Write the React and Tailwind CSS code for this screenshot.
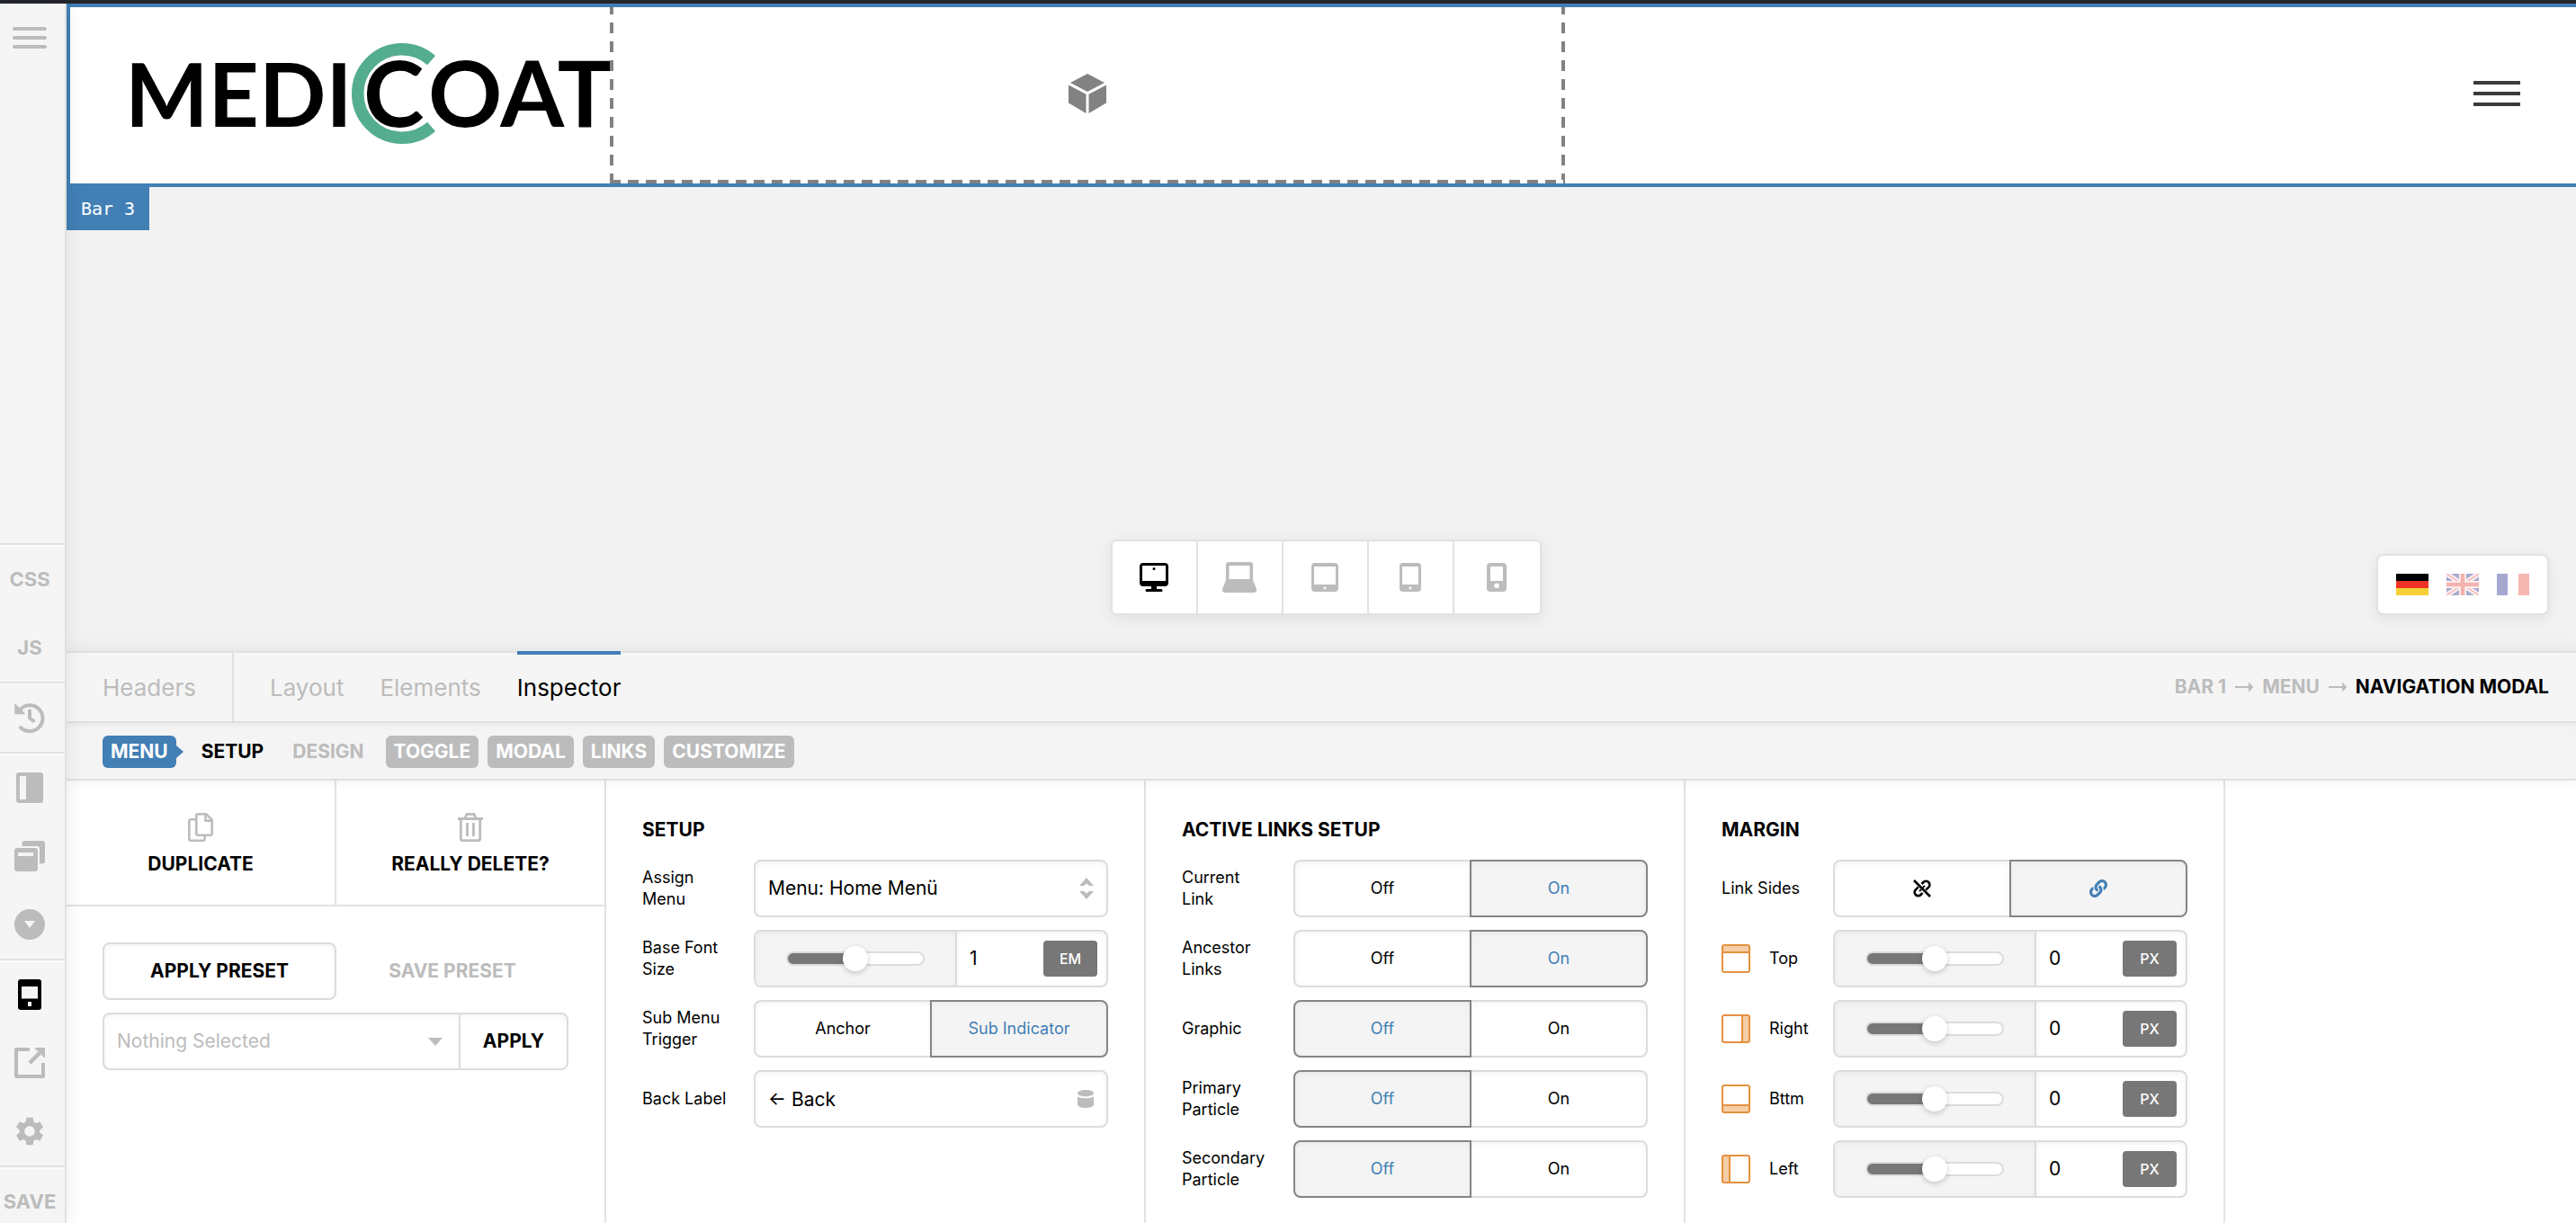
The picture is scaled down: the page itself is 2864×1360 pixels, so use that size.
import { useId, useState } from "react";
import { FaLink } from "react-icons/fa";
import { MdSettings } from "react-icons/md";

const tabs = ["Layout", "Elements", "Inspector"];

const groups = ["Toggle", "Modal", "Links", "Customize"];

const devices = [
  { name: "Desktop", icon: DesktopIcon },
  { name: "Laptop", icon: LaptopIcon },
  { name: "Tablet", icon: TabletIcon },
  { name: "Phone landscape", icon: PhoneIcon },
  { name: "Phone", icon: SmallPhoneIcon },
];

const languages = [
  { name: "Deutsch", flag: GermanFlag },
  { name: "English", flag: BritishFlag },
  { name: "Français", flag: FrenchFlag },
];

const activeLinks = [
  { label: "Current Link", on: true },
  { label: "Ancestor Links", on: true },
  { label: "Graphic", on: false },
  { label: "Primary Particle", on: false },
  { label: "Secondary Particle", on: false },
];

const sides = ["Top", "Right", "Bttm", "Left"];

/* ---------- Icons ---------- */

function Logo() {
  return (
    <svg
      viewBox="-12 -12 550 136"
      className="shrink-0 w-[550px] h-[136px]"
      role="img"
      aria-label="Medicoat"
    >
      <path
        d="M333.6 19.1A49.25 49.25 0 1 0 333.6 92.9"
        fill="none"
        stroke="#54ad8f"
        strokeWidth="13.5"
      />
      <g fontFamily="Lato, sans-serif" fontWeight="700" fill="#000">
        <text x="-7" y="93" fontSize="98">MEDI</text>
        <text x="258" y="93" fontSize="102">C</text>
        <text x="330" y="93" fontSize="102">OAT</text>
      </g>
    </svg>
  );
}

function CubeIcon() {
  return (
    <svg viewBox="0 0 42 44" className="w-[42px] h-11" fill="#828282">
      <path d="M21 0l19 10-19 10L2 10zM0 12.5l19.5 10.3V44L0 32.5zM42 12.5L22.5 22.8V44L42 32.5z" />
    </svg>
  );
}

function HistoryIcon() {
  return (
    <svg viewBox="0 0 34 34" className="size-[34px]" fill="none" stroke="currentColor" strokeWidth="4">
      <path d="M6.5 8A14.4 14.4 0 1 1 7 28" strokeLinecap="round" />
      <path d="M17 9.5v8l4 3" strokeLinecap="round" strokeLinejoin="round" />
      <path d="M1 2.5v10h10z" fill="currentColor" strokeWidth="1.5" strokeLinejoin="round" />
    </svg>
  );
}

function PanelIcon() {
  return (
    <svg viewBox="0 0 30 34" className="w-[30px] h-[34px]" fill="currentColor" fillRule="evenodd">
      <path d="M3 0h24a3 3 0 0 1 3 3v28a3 3 0 0 1-3 3H3a3 3 0 0 1-3-3V3a3 3 0 0 1 3-3zM4 4v26h7V4z" />
    </svg>
  );
}

function WindowsIcon() {
  return (
    <svg viewBox="0 0 34 34" className="size-[34px]" fill="currentColor" fillRule="evenodd">
      <path d="M11.5 0H31a3 3 0 0 1 3 3v19.5a3 3 0 0 1-3 3h-3V9a3 3 0 0 0-3-3H8.500V3a3 3 0 0 1 3-3z" />
      <path d="M3 8h20a3 3 0 0 1 3 3v20a3 3 0 0 1-3 3H3a3 3 0 0 1-3-3V11a3 3 0 0 1 3-3zM4 13v4h17v-4z" />
    </svg>
  );
}

function CircleDownIcon() {
  return (
    <svg viewBox="0 0 34 34" className="size-[34px]" fill="currentColor" fillRule="evenodd">
      <path d="M17 0a17 17 0 1 1 0 34 17 17 0 0 1 0-34zM11 13l6 8 6-8z" />
    </svg>
  );
}

function MobileIcon() {
  return (
    <svg viewBox="0 0 26 34" className="w-[26px] h-[34px]" fill="currentColor" fillRule="evenodd">
      <path d="M3 0h20a3 3 0 0 1 3 3v28a3 3 0 0 1-3 3H3a3 3 0 0 1-3-3V3a3 3 0 0 1 3-3zM4 8v13.500h18V8zM11 25v5h4v-5z" />
    </svg>
  );
}

function ExternalIcon() {
  return (
    <svg viewBox="0 0 34 34" className="size-[34px]" fill="none" stroke="currentColor" strokeWidth="4">
      <path d="M17 2H2v30h30V17" strokeLinejoin="round" />
      <path d="M17 17L28 6" strokeWidth="4.500" />
      <path d="M22 0h12v12z" fill="currentColor" stroke="none" />
    </svg>
  );
}

function DesktopIcon() {
  return (
    <svg viewBox="0 0 32 32" className="size-8" fill="currentColor" fillRule="evenodd">
      <path d="M4 0h24a4 4 0 0 1 4 4v18a4 4 0 0 1-4 4h-9v3h5a1.500 1.500 0 0 1 0 3H8a1.500 1.500 0 0 1 0-3h5v-3H4a4 4 0 0 1-4-4V4a4 4 0 0 1 4-4zM3 3v17h26V3z" />
      <circle cx="16" cy="6.500" r="1.500" />
    </svg>
  );
}

function LaptopIcon() {
  return (
    <svg viewBox="0 0 38 34" className="w-[38px] h-[34px]" fill="currentColor" fillRule="evenodd">
      <path d="M7 0h24a3 3 0 0 1 3 3v17l4 10a3 3 0 0 1-3 4H3a3 3 0 0 1-3-4l4-10V3a3 3 0 0 1 3-3zM7.500 4v15h23V4z" />
    </svg>
  );
}

function TabletIcon() {
  return (
    <svg viewBox="0 0 30 32" className="w-[30px] h-8" fill="currentColor" fillRule="evenodd">
      <path d="M4 0h22a4 4 0 0 1 4 4v24a4 4 0 0 1-4 4H4a4 4 0 0 1-4-4V4a4 4 0 0 1 4-4zM3 4v20h24V4zM15 26.500a1.500 1.500 0 1 0 0 3 1.500 1.500 0 0 0 0-3z" />
    </svg>
  );
}

function PhoneIcon() {
  return (
    <svg viewBox="0 0 24 32" className="w-6 h-8" fill="currentColor" fillRule="evenodd">
      <path d="M4 0h16a4 4 0 0 1 4 4v24a4 4 0 0 1-4 4H4a4 4 0 0 1-4-4V4a4 4 0 0 1 4-4zM3 4v20h18V4zM12 26.500a1.500 1.500 0 1 0 0 3 1.500 1.500 0 0 0 0-3z" />
    </svg>
  );
}

function SmallPhoneIcon() {
  return (
    <svg viewBox="0 0 22 32" className="w-[22px] h-8" fill="currentColor" fillRule="evenodd">
      <path d="M4 0h14a4 4 0 0 1 4 4v24a4 4 0 0 1-4 4H4a4 4 0 0 1-4-4V4a4 4 0 0 1 4-4zM4 4v16h14V4zM11 22.500a2.800 2.800 0 1 0 0 5.600 2.800 2.800 0 0 0 0-5.600z" />
    </svg>
  );
}

function GermanFlag() {
  return (
    <svg viewBox="0 0 36 24" className="w-9 h-6">
      <path d="M0 0h36v8H0z" fill="#000" />
      <path d="M0 8h36v8H0z" fill="#ee3124" />
      <path d="M0 16h36v8H0z" fill="#f7d038" />
    </svg>
  );
}

function BritishFlag() {
  return (
    <svg viewBox="0 0 36 24" className="w-9 h-6">
      <path d="M0 0h36v24H0z" fill="#a9aad0" />
      <path d="M0 0l36 24M36 0L0 24" stroke="#fdf3f3" strokeWidth="5.500" />
      <path d="M0 0l36 24M36 0L0 24" stroke="#f5bcba" strokeWidth="1.800" />
      <path d="M18 0v24M0 12h36" stroke="#fdf3f3" strokeWidth="8" />
      <path d="M18 0v24M0 12h36" stroke="#f3b3b0" strokeWidth="4.500" />
    </svg>
  );
}

function FrenchFlag() {
  return (
    <svg viewBox="0 0 36 24" className="w-9 h-6">
      <path d="M0 0h12v24H0z" fill="#a6a8d2" />
      <path d="M12 0h12v24H12z" fill="#fff" />
      <path d="M24 0h12v24H24z" fill="#f6b6b1" />
    </svg>
  );
}

function DuplicateIcon() {
  return (
    <svg viewBox="0 0 28 32" className="w-7 h-8" fill="none" stroke="currentColor" strokeWidth="2.600" strokeLinejoin="round">
      <path d="M11.300 1.300h9l6.400 6.400v15a2 2 0 0 1-2 2H11.300a2 2 0 0 1-2-2V3.300a2 2 0 0 1 2-2z" />
      <path d="M19.500 1.800v7h7" />
      <path d="M9 7.300H3.300a2 2 0 0 0-2 2v19.400a2 2 0 0 0 2 2h13.400a2 2 0 0 0 2-2V25" />
    </svg>
  );
}

function TrashIcon() {
  return (
    <svg viewBox="0 0 28 32" className="w-7 h-8" fill="none" stroke="currentColor" strokeWidth="2.800" strokeLinejoin="round">
      <path d="M0 6.500h28M8 6l2-4.700h8L20 6" />
      <path d="M3.300 7v21.700a2 2 0 0 0 2 2h17.400a2 2 0 0 0 2-2V7M10.500 11v15M17.500 11v15" />
    </svg>
  );
}

function SortIcon() {
  return (
    <svg viewBox="0 0 16 24" className="w-4 h-6" fill="#bcbcbc">
      <path d="M8 0l8 9h-5L8 6.500 5 9H0zM8 24l8-9h-5L8 17.500 5 15H0z" />
    </svg>
  );
}

function DatabaseIcon() {
  return (
    <svg viewBox="0 0 18 20" className="w-[18px] h-5" fill="#bcbcbc">
      <ellipse cx="9" cy="3.700" rx="9" ry="3.700" />
      <path d="M0 7.500c3 2.400 15 2.400 18 0v8.500c0 5.300-18 5.300-18 0z" />
    </svg>
  );
}

function UnlinkIcon() {
  return (
    <svg viewBox="0 0 20 20" className="size-5" fill="none" stroke="currentColor" strokeWidth="2.600">
      <path d="M1 1l18 18" />
      <path d="M9.500 5l2-2a4 4 0 0 1 5.700 5.700l-3 3M5.800 8.300l-3 3a4 4 0 0 0 5.700 5.700l2-2" />
      <path d="M10.800 9.200L13 7M7 13l2-2" strokeWidth="1.800" />
    </svg>
  );
}

const sidePaths = {
  Top: { fill: "M1 1h30v8H1z", line: "M1 9h30" },
  Right: { fill: "M23 1h8v30h-8z", line: "M23 1v30" },
  Bttm: { fill: "M1 23h30v8H1z", line: "M1 23h30" },
  Left: { fill: "M1 1h8v30H1z", line: "M9 1v30" },
};

function SideIcon({ side }) {
  return (
    <svg viewBox="0 0 32 32" className="size-8" fill="none" stroke="#e5913f" strokeWidth="2">
      <path d={sidePaths[side].fill} fill="#f5cda6" stroke="none" />
      <path d={sidePaths[side].line} />
      <rect x="1" y="1" width="30" height="30" rx="2" />
    </svg>
  );
}

/* ---------- Sidebar ---------- */

function SidebarButton({ label, dark, children }) {
  return (
    <button
      aria-label={label}
      className={`w-full h-[76px] flex items-center justify-center text-[22px] font-bold ${
        dark ? "text-black" : "text-[#bcbcbc]"
      }`}
    >
      {children}
    </button>
  );
}

function Sidebar() {
  const section = "border-t-2 border-[#e2e2e2] pr-1.5 shadow-[inset_0_2px_0_#fafafa]";

  return (
    <aside className="relative z-10 w-[74px] shrink-0 flex flex-col bg-[#f5f5f5] border-r-2 border-[#e0e0e0] shadow-[0_0_20px_rgba(0,0,0,0.08)]">
      <button aria-label="Menu" className="w-full pt-[26px] pr-1.5 flex flex-col items-center gap-1.5">
        <span className="w-[38px] h-1 rounded-full bg-[#bcbcbc]" />
        <span className="w-[38px] h-1 rounded-full bg-[#bcbcbc]" />
        <span className="w-[38px] h-1 rounded-full bg-[#bcbcbc]" />
      </button>

      <div className={`mt-auto ${section}`}>
        <SidebarButton label="CSS">CSS</SidebarButton>
        <SidebarButton label="JS">JS</SidebarButton>
      </div>
      <div className={section}>
        <SidebarButton label="History"><HistoryIcon /></SidebarButton>
      </div>
      <div className={section}>
        <SidebarButton label="Template"><PanelIcon /></SidebarButton>
        <SidebarButton label="Windows"><WindowsIcon /></SidebarButton>
        <SidebarButton label="Collapse"><CircleDownIcon /></SidebarButton>
      </div>
      <div className={section}>
        <SidebarButton label="Responsive" dark><MobileIcon /></SidebarButton>
        <SidebarButton label="Open page"><ExternalIcon /></SidebarButton>
        <SidebarButton label="Settings"><MdSettings size={38} /></SidebarButton>
      </div>
      <div className={section}>
        <button className="w-full h-[62px] pt-3.5 text-center text-[22px] font-bold text-[#bcbcbc]">
          SAVE
        </button>
      </div>
    </aside>
  );
}

/* ---------- Preview ---------- */

function Preview() {
  const [device, setDevice] = useState("Desktop");

  return (
    <section className="relative flex-1 bg-[#f2f2f2]">
      <header className="h-[204px] flex bg-white border-4 border-r-0 border-[#427fb5]">
        <div className="w-[600px] shrink-0 flex items-center pl-14 pb-1">
          <Logo />
        </div>

        {/* Selected element outline */}
        <div className="flex-[1062] flex flex-col">
          <div className="flex-1 flex justify-between">
            <span className="w-1 bg-[repeating-linear-gradient(to_bottom,#828282_0_12px,transparent_12px_21px)] bg-[position:0_-4px]" />
            <span className="self-center"><CubeIcon /></span>
            <span className="w-1 bg-[repeating-linear-gradient(to_bottom,#828282_0_12px,transparent_12px_21px)] bg-[position:0_-4px]" />
          </div>
          <span className="h-1 bg-[repeating-linear-gradient(to_right,#828282_0_12px,transparent_12px_20px)]" />
        </div>

        <div className="flex-[1124] flex items-center justify-end pb-1">
          <button aria-label="Open navigation" className="mr-[62px] flex flex-col gap-2">
            <span className="w-[52px] h-1 bg-[#3b3b3b]" />
            <span className="w-[52px] h-1 bg-[#3b3b3b]" />
            <span className="w-[52px] h-1 bg-[#3b3b3b]" />
          </button>
        </div>
      </header>
      <span className="w-[92px] h-12 flex items-center justify-center bg-[#427fb5] text-white text-xl font-['DejaVu_Sans_Mono',monospace]">
        Bar 3
      </span>

      {/* Device switcher */}
      <div className="absolute bottom-10 left-2.5 right-0 flex justify-center">
        <div className="flex divide-x-2 divide-[#e2e2e2] rounded-md border-2 border-[#e2e2e2] bg-white shadow-[0_4px_18px_rgba(0,0,0,0.08)]">
          {devices.map(({ name, icon: Icon }) => (
            <button
              key={name}
              aria-label={name}
              onClick={() => setDevice(name)}
              className={`h-20 w-[95px] flex items-center justify-center ${
                device === name ? "text-black" : "text-[#bcbcbc]"
              }`}
            >
              <Icon />
            </button>
          ))}
        </div>
      </div>

      {/* Languages */}
      <div className="absolute bottom-10 right-[30px] flex gap-5 rounded-lg border-2 border-[#e2e2e2] bg-white p-5 shadow-[0_4px_14px_rgba(0,0,0,0.08)]">
        {languages.map(({ name, flag: Flag }) => (
          <button key={name} aria-label={name}>
            <Flag />
          </button>
        ))}
      </div>
    </section>
  );
}

/* ---------- Controls ---------- */

function Row({ label, icon, htmlFor, children }) {
  return (
    <div className="flex items-center h-16">
      {icon && <span className="w-[53px] shrink-0">{icon}</span>}
      <label
        htmlFor={htmlFor}
        className={`shrink-0 pr-5 text-lg leading-6 ${icon ? "w-[71px]" : "w-[124px]"}`}
      >
        {label}
      </label>
      <div className="flex-1 min-w-0 h-full">{children}</div>
    </div>
  );
}

function Toggle({ label, options, value }) {
  const [active, setActive] = useState(value);
  const id = useId();

  return (
    <div className="flex items-center h-16">
      <span id={id} className="w-[124px] shrink-0 pr-6 text-lg leading-6">
        {label}
      </span>
      <div role="group" aria-labelledby={id} className="flex-1 h-full flex">
        {options.map((option, index) => (
          <button
            key={index}
            aria-label={option.name}
            aria-pressed={active === index}
            onClick={() => setActive(index)}
            className={`flex-1 border-2 flex items-center justify-center text-lg first:rounded-l-lg last:rounded-r-lg last:-ml-0.5 shadow-[inset_0_2px_6px_rgba(0,0,0,0.05)] ${
              active === index
                ? "relative bg-[#f4f4f4] border-[#858585] text-[#427fb5]"
                : "bg-white border-[#dcdcdc] text-black"
            }`}
          >
            {option.content ?? option.name}
          </button>
        ))}
      </div>
    </div>
  );
}

function Slider({ label, icon, value, unit }) {
  const [text, setText] = useState(value);
  const id = useId();

  return (
    <Row label={label} icon={icon} htmlFor={id}>
      <div className="h-full flex rounded-lg border-2 border-[#dcdcdc] overflow-hidden">
        <div className="w-[222px] shrink-0 flex items-center justify-center bg-[#f4f4f4] shadow-[inset_0_2px_6px_rgba(0,0,0,0.05)]">
          <input
            type="range"
            aria-label={`${label} slider`}
            defaultValue="50"
            className="appearance-none w-[154px] h-4 rounded-full border-2 border-[#dcdcdc] bg-[linear-gradient(to_right,#777_50%,#fff_50%)] [&::-webkit-slider-thumb]:appearance-none [&::-webkit-slider-thumb]:size-7 [&::-webkit-slider-thumb]:rounded-full [&::-webkit-slider-thumb]:bg-white [&::-webkit-slider-thumb]:shadow-[0_2px_6px_rgba(0,0,0,0.2)]"
          />
        </div>
        <div className="flex-1 min-w-0 flex items-center border-l-2 border-[#dcdcdc] pr-2.5 shadow-[inset_0_2px_6px_rgba(0,0,0,0.05)]">
          <input
            id={id}
            value={text}
            onChange={(e) => setText(e.target.value)}
            className="flex-1 min-w-0 pl-3.5 text-[21px] outline-none"
          />
          <button className="w-[60px] shrink-0 h-10 rounded-sm bg-[#777] text-white text-base font-medium">
            {unit}
          </button>
        </div>
      </div>
    </Row>
  );
}

function Column({ title, children }) {
  return (
    <section className="w-[600px] shrink-0 border-r-2 border-[#e2e2e2] px-10 pt-10 pb-7">
      <h2 className="mb-[18px] text-[21px] leading-[30px] font-bold">{title}</h2>
      <div className="flex flex-col gap-3.5">{children}</div>
    </section>
  );
}

/* ---------- Inspector ---------- */

function Actions() {
  const action =
    "flex-1 h-[138px] flex flex-col items-center pt-9 text-[21px] leading-6 font-bold gap-[13px]";
  const field = "border-2 border-[#dcdcdc] shadow-[inset_0_2px_6px_rgba(0,0,0,0.05)]";

  return (
    <section className="w-[600px] shrink-0 border-r-2 border-[#e2e2e2]">
      <div className="flex divide-x-2 divide-[#e2e2e2] border-b-2 border-[#e2e2e2]">
        <button className={action}>
          <span className="text-[#bcbcbc]"><DuplicateIcon /></span>
          DUPLICATE
        </button>
        <button className={action}>
          <span className="text-[#bcbcbc]"><TrashIcon /></span>
          REALLY DELETE?
        </button>
      </div>

      <div className="px-10 pt-10">
        <div className="flex h-16 text-[21px] font-bold">
          <button className={`w-[260px] rounded-lg ${field}`}>APPLY PRESET</button>
          <button className="flex-1 text-[#bcbcbc]">SAVE PRESET</button>
        </div>

        <div className={`mt-3.5 h-16 flex rounded-lg ${field}`}>
          <div className="relative flex-1">
            <select
              aria-label="Preset"
              className="appearance-none size-full pl-3.5 text-[21px] text-[#bcbcbc] outline-none"
            >
              <option>Nothing Selected</option>
            </select>
            <span className="absolute right-[18px] top-[26px] border-x-8 border-t-9 border-x-transparent border-t-[#bcbcbc] pointer-events-none" />
          </div>
          <button className="w-[120px] border-l-2 border-[#dcdcdc] text-[21px] font-bold">APPLY</button>
        </div>
      </div>
    </section>
  );
}

function Inspector() {
  const field =
    "appearance-none size-full rounded-lg border-2 border-[#dcdcdc] pl-3.5 pr-12 text-[21px] outline-none shadow-[inset_0_2px_6px_rgba(0,0,0,0.05)]";

  return (
    <div className="flex">
      <Actions />

      <Column title="SETUP">
        <Row label="Assign Menu" htmlFor="assign-menu">
          <div className="relative h-full">
            <select id="assign-menu" className={field}>
              <option>Menu: Home Menü</option>
            </select>
            <span className="absolute right-4 top-5 pointer-events-none"><SortIcon /></span>
          </div>
        </Row>
        <Slider label="Base Font Size" value="1" unit="EM" />
        <Toggle
          label="Sub Menu Trigger"
          options={[{ name: "Anchor" }, { name: "Sub Indicator" }]}
          value={1}
        />
        <Row label={<span className="whitespace-nowrap">Back Label</span>} htmlFor="back-label">
          <div className="relative h-full">
            <input id="back-label" defaultValue="← Back" className={field} />
            <button aria-label="Dynamic content" className="absolute right-4 top-[22px]">
              <DatabaseIcon />
            </button>
          </div>
        </Row>
      </Column>

      <Column title="ACTIVE LINKS SETUP">
        {activeLinks.map(({ label, on }) => (
          <Toggle
            key={label}
            label={label}
            options={[{ name: "Off" }, { name: "On" }]}
            value={on ? 1 : 0}
          />
        ))}
      </Column>

      <Column title="MARGIN">
        <Toggle
          label="Link Sides"
          options={[
            { name: "Unlink sides", content: <UnlinkIcon /> },
            { name: "Link sides", content: <FaLink size={20} /> },
          ]}
          value={1}
        />
        {sides.map((side) => (
          <Slider key={side} label={side} icon={<SideIcon side={side} />} value="0" unit="PX" />
        ))}
      </Column>
    </div>
  );
}

function Arrow() {
  return (
    <svg viewBox="0 0 20 12" className="w-5 h-3" fill="#bcbcbc">
      <path d="M0 5h15V0.500L20.500 6 15 11.500V7H0z" />
    </svg>
  );
}

export default function App() {
  return (
    <div className="min-h-screen flex flex-col bg-white text-black font-['Inter',sans-serif] overflow-hidden">
      <div className="h-1 bg-[#23272b]" />
      <div className="flex-1 flex">
        <Sidebar />

        <main className="flex-1 min-w-0 flex flex-col">
          <Preview />

          <div className="relative border-t-2 border-[#e0e0e0] bg-white shadow-[0_0_20px_rgba(0,0,0,0.08)]">
            <div className="h-[78px] flex bg-[#f5f5f5] border-b-2 border-[#e0e0e0] text-[26px] text-[#bcbcbc]">
              <a href="#headers" className="flex items-center px-10 border-r-2 border-[#e0e0e0]">
                Headers
              </a>
              <nav className="flex gap-10 pl-10">
                {tabs.map((tab) => (
                  <a
                    key={tab}
                    href={`#${tab.toLowerCase()}`}
                    className={`relative flex items-center ${tab === "Inspector" ? "text-black" : ""}`}
                  >
                    {tab === "Inspector" && (
                      <span className="absolute inset-x-0 -top-0.5 h-1 bg-[#427fb5]" />
                    )}
                    {tab}
                  </a>
                ))}
              </nav>
              <nav className="ml-auto pr-[30px] flex items-center gap-2.5 text-[21px] font-bold">
                <a href="#bar">BAR 1</a>
                <Arrow />
                <a href="#menu">MENU</a>
                <Arrow />
                <a href="#modal" className="text-black">NAVIGATION MODAL</a>
              </nav>
            </div>

            <nav className="relative h-16 flex items-center pt-0.5 pl-10 bg-[#f4f4f4] border-b-2 border-[#e0e0e0] text-[21px] font-bold uppercase shadow-[inset_0_6px_8px_-4px_rgba(0,0,0,0.05),0_4px_10px_rgba(0,0,0,0.04)]">
              <a href="#menu-group" className="h-9 flex items-center rounded-md px-[9px] bg-[#427fb5] text-white">
                Menu
              </a>
              <span className="border-y-7 border-l-8 border-y-transparent border-l-[#427fb5]" />
              <a href="#setup" className="ml-5">Setup</a>
              <a href="#design" className="ml-8 mr-6 text-[#bcbcbc]">Design</a>
              <div className="flex gap-2.5">
                {groups.map((group) => (
                  <a
                    key={group}
                    href={`#${group.toLowerCase()}`}
                    className="h-9 flex items-center rounded-md px-[9px] bg-[#bcbcbc] text-white"
                  >
                    {group}
                  </a>
                ))}
              </div>
            </nav>

            <Inspector />
          </div>
        </main>
      </div>
    </div>
  );
}
